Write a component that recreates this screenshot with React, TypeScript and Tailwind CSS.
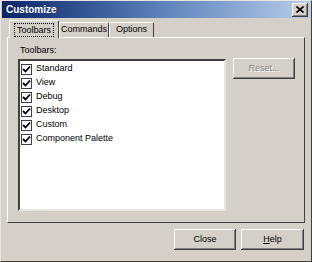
import React from 'react';

const toolbars = ['Standard', 'View', 'Debug', 'Desktop', 'Custom', 'Component Palette'];

const raised =
  'shadow-[inset_-1px_-1px_#404040,inset_1px_1px_#ffffff,inset_-2px_-2px_#808080,inset_2px_2px_#d4d0c8]';

function Check() {
  return (
    <span className="w-[11px] h-[11px] shrink-0 border border-[#404040] bg-white flex items-center justify-center">
      <svg width="9" height="9" viewBox="0 0 9 9">
        <path d="M1 4 L3.5 6.5 L8 1.5" fill="none" stroke="#000" strokeWidth="1.8" />
      </svg>
    </span>
  );
}

function Tab({ label, active, w }: { label: string; active?: boolean; w: string }) {
  if (active) {
    return (
      <div
        className={`${w} h-[18px] -mb-px relative z-10 bg-[#d4d0c8] border-t border-l border-white border-r border-r-[#404040] rounded-t-[2px] flex items-center justify-center`}
      >
        <span className="px-[2px] outline-1 outline-dotted outline-black leading-[12px]">{label}</span>
      </div>
    );
  }
  return (
    <div
      className={`${w} h-[15px] border-t border-l border-white border-r border-r-[#404040] rounded-t-[2px] flex items-center justify-center`}
    >
      {label}
    </div>
  );
}

export default function App() {
  return (
    <div
      className="w-[312px] h-[262px] bg-[#d4d0c8] flex flex-col border border-t-[#e8e6e1] border-l-[#e8e6e1] border-r-[#404040] border-b-[#404040] text-black text-[9px]"
      style={{ fontFamily: '"Liberation Sans", Arial, sans-serif' }}
    >
      {/* title bar */}
      <div className="h-[17px] mx-px flex items-center justify-between pl-[4px] pr-[2px] bg-gradient-to-r from-[#0a246a] via-[#5b7fb8] to-[#b8cde8]">
        <span className="text-white font-bold text-[10px]">Customize</span>
        <div className={`w-[16px] h-[14px] bg-[#d4d0c8] ${raised} flex items-center justify-center`}>
          <svg width="8" height="7" viewBox="0 0 8 7">
            <path d="M0.5 0.5 L7.5 6.5 M7.5 0.5 L0.5 6.5" stroke="#000" strokeWidth="1.6" />
          </svg>
        </div>
      </div>

      {/* tabs */}
      <div className="flex flex-col px-[6px] pt-[1px]">
        <div className="flex items-end pl-[2px] h-[18px]">
          <Tab label="Toolbars" active w="w-[50px]" />
          <Tab label="Commands" w="w-[50px]" />
          <Tab label="Options" w="w-[45px]" />
        </div>
        <div className="h-[186px] border border-t-white border-l-white border-r-[#404040] border-b-[#404040] flex gap-[7px] pl-[10px] pt-[7px]">
          <div className="flex flex-col">
            <div className="pl-[2px] leading-[11px] h-[11px] mb-[3px]">Toolbars:</div>
            <div className="w-[208px] h-[152px] bg-white border-2 border-t-[#404040] border-l-[#404040] border-r-[#e8e6e1] border-b-[#e8e6e1] flex flex-col pt-px">
              {toolbars.map((t) => (
                <div key={t} className="h-[14px] flex items-center gap-[4px] pl-px">
                  <Check />
                  <span>{t}</span>
                </div>
              ))}
            </div>
          </div>
          <div className="pt-[13px]">
            <div className={`w-[62px] h-[21px] ${raised} flex items-center justify-center text-[#808080] [text-shadow:1px_1px_#ffffff]`}>
              Reset...
            </div>
          </div>
        </div>
      </div>

      {/* buttons */}
      <div className="flex justify-end gap-[5px] pr-[7px] mt-[6px]">
        <div className={`w-[62px] h-[21px] ${raised} flex items-center justify-center`}>Close</div>
        <div className={`w-[63px] h-[21px] ${raised} flex items-center justify-center`}>
          <span>
            <span className="underline">H</span>elp
          </span>
        </div>
      </div>
    </div>
  );
}
